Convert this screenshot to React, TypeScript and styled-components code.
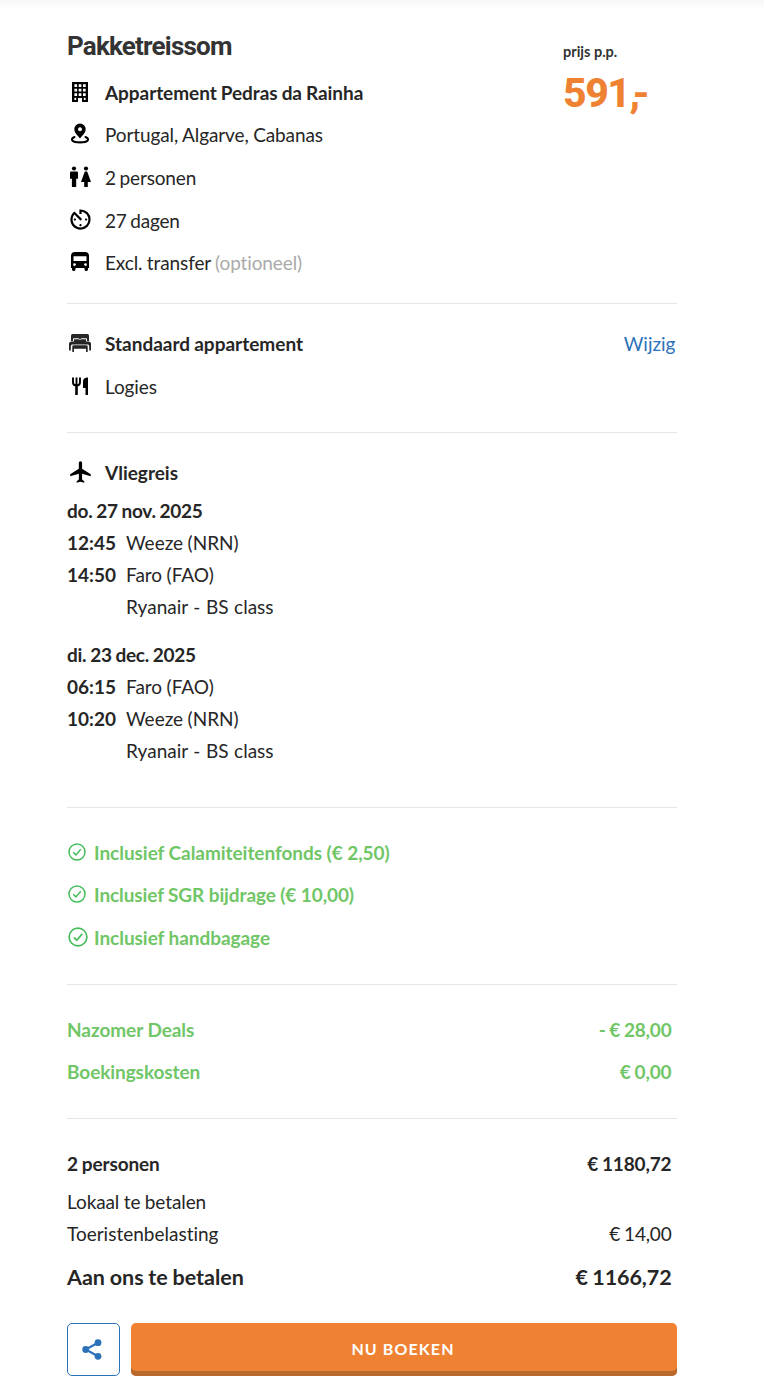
import React from 'react';
import styled, { createGlobalStyle } from 'styled-components';
import { MdAvTimer, MdFlight } from 'react-icons/md';

const GlobalStyle = createGlobalStyle`
  * { box-sizing: border-box; }
  body { margin: 0; background: #fff; }
`;

const Page = styled.main`
  width: 764px;
  height: 1396px;
  overflow: hidden;
  padding: 26px 87px 0 67px;
  background: linear-gradient(#f7f7f7, #fff 10px);
  color: #262626;
  font-family: Lato, sans-serif;
  font-size: 19px;
  font-variant-ligatures: none;
`;

const Hero = styled.header`
  display: flex;
  justify-content: space-between;
  height: 277px;
`;

const Title = styled.h1`
  margin: 0 0 6px;
  height: 39px;
  line-height: 40px;
  font-family: Roboto, sans-serif;
  font-size: 26px;
  font-weight: 700;
  letter-spacing: -0.8px;
  color: #333;
`;

const PriceBox = styled.div`
  width: 114px;
  padding-top: 16px;
`;

const PriceLabel = styled.div`
  height: 20px;
  line-height: 20px;
  font-size: 14.5px;
  font-weight: 700;
  color: #333;
`;

const Price = styled.div`
  margin-top: 6px;
  height: 50px;
  line-height: 50px;
  font-family: Roboto, sans-serif;
  font-size: 41px;
  font-weight: 800;
  letter-spacing: -1.5px;
  color: #ef8232;
  white-space: nowrap;
`;

const Comma = styled.span`
  letter-spacing: -7.5px;
`;

const Section = styled.section<{ $h: number; $top: number }>`
  height: ${(p) => p.$h}px;
  padding-top: ${(p) => p.$top}px;
  border-top: 1px solid #e5e5e5;
`;

const Row = styled.div<{ $green?: boolean }>`
  display: flex;
  align-items: center;
  height: 42.6px;
  white-space: nowrap;
  color: ${(p) => (p.$green ? '#70c666' : 'inherit')};
`;

const IconCell = styled.span<{ $w?: number; $pad?: number }>`
  display: flex;
  flex: none;
  align-items: center;
  width: ${(p) => p.$w ?? 38}px;
  height: 26px;
  margin-bottom: 1px;
  padding-left: ${(p) => p.$pad ?? 0}px;
  color: #000;
  svg { display: block; flex: none; }
`;

const Text = styled.span<{ $bold?: boolean; $ls?: number; $ws?: number }>`
  font-weight: ${(p) => (p.$bold ? 700 : 400)};
  letter-spacing: ${(p) => p.$ls ?? 0}px;
  word-spacing: ${(p) => p.$ws ?? 0}px;
`;

const Muted = styled.span`
  color: #aaa;
`;

const Amount = styled(Text)`
  margin-left: auto;
  padding-right: 5.5px;
`;

const ChangeLink = styled.a`
  margin-left: auto;
  padding-right: 1.5px;
  color: #2b72b9;
  text-decoration: none;
`;

const Line = styled.div`
  display: flex;
  height: 32px;
  line-height: 32px;
  white-space: nowrap;
`;

const Time = styled.span`
  width: 59px;
  font-weight: 700;
`;

const Flights = styled.div`
  padding-top: 1px;
`;

const Flight = styled.div`
  margin-bottom: 16px;
`;

const Costs = styled.div`
  padding: 1px 0 6px;
`;

const Total = styled(Row)`
  font-size: 21.5px;
`;

const Actions = styled.div`
  display: flex;
  gap: 11px;
  height: 53px;
`;

const ShareButton = styled.button`
  display: flex;
  align-items: center;
  justify-content: center;
  width: 53px;
  padding: 0 3px 0 0;
  border: 1px solid #2b72b9;
  border-radius: 5px;
  background: #fff;
  color: #2b72b9;
`;

const BookButton = styled.button`
  flex: 1;
  padding: 0 2px 2px 0;
  border: 0;
  border-radius: 5px;
  background: #ef8232;
  box-shadow: inset 0 -5px 0 #b86a2d;
  color: #fff;
  font: 700 16px Lato, sans-serif;
  letter-spacing: 1.1px;
`;

const Building = () => (
  <svg width="26" height="24" viewBox="0 0 26 24">
    <path fill="#000" fillRule="evenodd" d="M5 2h16v20h-6v-4h-4v4H5zM7.4 4.3v2.6h2.7V4.3zm4.300 0v2.600h2.700V4.300zm4.300 0v2.600h2.700V4.300zM7.400 8.800v2.600h2.700V8.800zm4.300 0v2.600h2.700V8.800zm4.300 0v2.600h2.700V8.800zM7.400 13.300v2.600h2.700v-2.600zm4.300 0v2.600h2.700v-2.600zm4.300 0v2.600h2.700v-2.600zM7.400 17.800V20h1.800v-2.200zm9.400 0V20h1.800v-2.200z" />
  </svg>
);

const Pin = () => (
  <svg width="26" height="24" viewBox="0 0 26 24">
    <path fill="#000" fillRule="evenodd" d="M13 1.500a5.700 5.700 0 0 0-5.700 5.700c0 3.500 3.500 6.200 5.700 9.300 2.200-3.100 5.700-5.800 5.700-9.300A5.700 5.700 0 0 0 13 1.500zm0 3.700a2 2 0 1 1 0 4 2 2 0 0 1 0-4z" />
    <path fill="none" stroke="#000" strokeWidth="2.100" strokeLinecap="round" d="M7.500 15c-5 2.300-2.500 5.400 5.500 5.400s10.500-3.100 5.500-5.400" />
  </svg>
);

const People = () => (
  <svg width="26" height="24" viewBox="0 0 26 24" fill="#000">
    <circle cx="7" cy="3.500" r="2.100" />
    <path d="M4.200 6.500h5.600q1.200 0 1.200 1.200v6H9.200V22H4.900v-8.300H3v-6q0-1.200 1.200-1.200z" />
    <circle cx="19" cy="3.500" r="2.100" />
    <path d="M17.800 6.500h2.400L24 17h-3.200v5h-3.600v-5H14z" />
  </svg>
);

const Bus = () => (
  <svg width="26" height="24" viewBox="0 0 26 24">
    <path fill="#000" fillRule="evenodd" d="M8 2h10q4 0 4 4v12h-1v1.600q0 1.400-1.400 1.400h-.7q-1.400 0-1.400-1.400V18h-9v1.600Q8.500 21 7.100 21h-.7Q5 21 5 19.600V18H4V6q0-4 4-4zm-1.500 4.200V11h13V6.200zM7.500 13.200a1.400 1.400 0 1 0 0 2.800 1.400 1.400 0 0 0 0-2.800zm11 0a1.400 1.400 0 1 0 0 2.800 1.400 1.400 0 0 0 0-2.800z" />
  </svg>
);

const Bed = () => (
  <svg width="26" height="24" viewBox="0 0 26 24" fill="#262626">
    <path d="M4 4.500Q4 3 5.500 3h15Q22 3 22 4.500V10h-2V8.200q0-.9-1-.9h-4q-1 0-2 1.200-1-1.200-2-1.200H7q-1 0-1 .9V10H4z" />
    <path d="M7 8.300h4.500q.8 0 1.500.8.700-.8 1.500-.8H19V11H7z" />
    <path d="M4.500 10.500h17q2.500 0 2.500 2.500v6.500h-1.800V15q0-1.500-1.500-1.500H5.300q-1.500 0-1.500 1.500v4.500H2V13q0-2.500 2.500-2.500z" />
    <path d="M6.500 14.300h13q1.200 0 1.200 1.200V21H19v-3.300H7V21H5.300v-5.500q0-1.200 1.200-1.200z" />
  </svg>
);

const Cutlery = () => (
  <svg width="26" height="24" viewBox="0 0 26 24">
    <path fill="none" stroke="#000" strokeWidth="1.900" d="M6 3.500v5q0 3 3.500 3t3.500-3v-5M9.500 3.500v8" />
    <path fill="#000" d="M8.200 10.500h2.600V21H8.200zM21 3.500V21h-2.500v-7H16V7.500q0-4 5-4z" />
  </svg>
);

const Check = ({ size }: { size: number }) => (
  <svg width={size} height={size} viewBox="0 0 18 18" fill="none" stroke="#46bd5b">
    <circle cx="9" cy="9" r="8" strokeWidth="1.500" />
    <path d="M5.200 9.300l2.700 2.600 4.900-5.700" strokeWidth="1.500" />
  </svg>
);

const Share = () => (
  <svg width="20" height="21" viewBox="0 0 20 21" fill="currentColor">
    <path d="M16 3.700L3.700 10.500 16 17.300" fill="none" stroke="currentColor" strokeWidth="2.200" />
    <circle cx="16" cy="3.700" r="3.400" />
    <circle cx="3.700" cy="10.500" r="3.400" />
    <circle cx="16" cy="17.300" r="3.400" />
  </svg>
);

const included = [
  { label: 'Inclusief Calamiteitenfonds (€ 2,50)', size: 18, ls: -0.05 },
  { label: 'Inclusief SGR bijdrage (€ 10,00)', size: 18, ls: -0.1 },
  { label: 'Inclusief handbagage', size: 20, ls: -0.05 },
];

const flights = [
  { date: 'do. 27 nov. 2025', legs: [['12:45', 'Weeze (NRN)'], ['14:50', 'Faro (FAO)']] },
  { date: 'di. 23 dec. 2025', legs: [['06:15', 'Faro (FAO)'], ['10:20', 'Weeze (NRN)']] },
];

export default function App() {
  return (
    <>
      <GlobalStyle />
      <Page>
        <Hero>
          <div>
            <Title>Pakketreissom</Title>
            <Row><IconCell><Building /></IconCell><Text $bold $ls={-0.06} $ws={-0.5}>Appartement Pedras da Rainha</Text></Row>
            <Row><IconCell><Pin /></IconCell><Text $ls={-0.1} $ws={-0.3}>Portugal, Algarve, Cabanas</Text></Row>
            <Row><IconCell><People /></IconCell><Text $ls={-0.15} $ws={-1}>2 personen</Text></Row>
            <Row><IconCell><MdAvTimer size={27} /></IconCell><Text $ls={-0.2} $ws={-1}>27 dagen</Text></Row>
            <Row><IconCell><Bus /></IconCell><Text $ls={-0.11} $ws={-0.4}>Excl. transfer <Muted>(optioneel)</Muted></Text></Row>
          </div>
          <PriceBox>
            <PriceLabel>prijs p.p.</PriceLabel>
            <Price>591<Comma>,</Comma>-</Price>
          </PriceBox>
        </Hero>
        <Section $h={129} $top={18.6}>
          <Row><IconCell><Bed /></IconCell><Text $bold $ws={-0.5}>Standaard appartement</Text><ChangeLink>Wijzig</ChangeLink></Row>
          <Row><IconCell><Cutlery /></IconCell><Text $ls={-0.1}>Logies</Text></Row>
        </Section>
        <Section $h={375} $top={18}>
          <Row><IconCell $pad={0.5}><MdFlight size={26} /></IconCell><Text $bold>Vliegreis</Text></Row>
          <Flights>
            {flights.map((f) => (
              <Flight key={f.date}>
                <Line><Text $bold $ls={-0.25} $ws={-0.6}>{f.date}</Text></Line>
                {f.legs.map(([time, place]) => (
                  <Line key={time}><Time>{time}</Time><Text $ws={-0.4}>{place}</Text></Line>
                ))}
                <Line><Time /><Text $ws={0.7}>Ryanair - BS class</Text></Line>
              </Flight>
            ))}
          </Flights>
        </Section>
        <Section $h={177} $top={23}>
          {included.map((item) => (
            <Row $green key={item.label}>
              <IconCell $w={27} $pad={1}><Check size={item.size} /></IconCell>
              <Text $bold $ls={item.ls}>{item.label}</Text>
            </Row>
          ))}
        </Section>
        <Section $h={134} $top={23}>
          <Row $green><Text $bold $ls={-0.06}>Nazomer Deals</Text><Amount $bold $ls={-0.2} $ws={-0.6}>- € 28,00</Amount></Row>
          <Row $green><Text $bold $ls={-0.08}>Boekingskosten</Text><Amount $bold $ls={-0.15} $ws={-0.5}>€ 0,00</Amount></Row>
        </Section>
        <Section $h={205} $top={23}>
          <Row><Text $bold $ls={-0.12} $ws={-0.6}>2 personen</Text><Amount $bold $ls={-0.15} $ws={-0.6}>€ 1180,72</Amount></Row>
          <Costs>
            <Line><Text $ls={-0.1} $ws={-0.3}>Lokaal te betalen</Text></Line>
            <Line><Text>Toeristenbelasting</Text><Amount $ls={-0.2} $ws={-0.6}>€ 14,00</Amount></Line>
          </Costs>
          <Total><Text $bold $ws={-0.5}>Aan ons te betalen</Text><Amount $bold $ls={-0.1} $ws={-0.6}>€ 1166,72</Amount></Total>
        </Section>
        <Actions>
          <ShareButton aria-label="Delen"><Share /></ShareButton>
          <BookButton>NU BOEKEN</BookButton>
        </Actions>
      </Page>
    </>
  );
}
